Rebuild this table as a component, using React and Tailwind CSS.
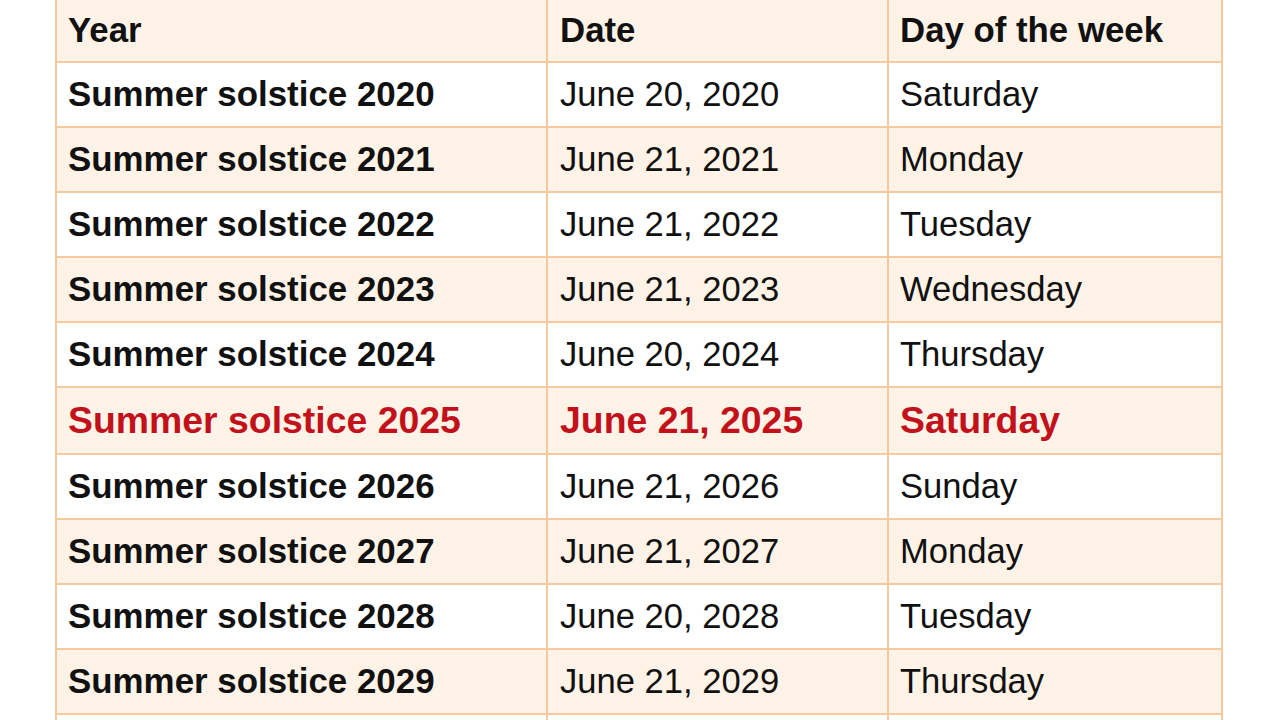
const rows = [
  { year: "Summer solstice 2020", date: "June 20, 2020", day: "Saturday" },
  { year: "Summer solstice 2021", date: "June 21, 2021", day: "Monday" },
  { year: "Summer solstice 2022", date: "June 21, 2022", day: "Tuesday" },
  { year: "Summer solstice 2023", date: "June 21, 2023", day: "Wednesday" },
  { year: "Summer solstice 2024", date: "June 20, 2024", day: "Thursday" },
  { year: "Summer solstice 2025", date: "June 21, 2025", day: "Saturday", hot: true },
  { year: "Summer solstice 2026", date: "June 21, 2026", day: "Sunday" },
  { year: "Summer solstice 2027", date: "June 21, 2027", day: "Monday" },
  { year: "Summer solstice 2028", date: "June 20, 2028", day: "Tuesday" },
  { year: "Summer solstice 2029", date: "June 21, 2029", day: "Thursday" },
];

export default function App() {
  return (
    <div
      className="h-[720px] w-[1279px] overflow-hidden bg-white text-[#111]"
      style={{ fontFamily: '"Liberation Sans", Arial, sans-serif' }}
    >
      <div className="ml-[55px] w-[1168px] border-x-2 border-[#f6c99e]">
        <div className="grid h-[63px] grid-cols-[491px_341px_332px] items-center border-b-2 border-[#f6c99e] bg-[#fef3e6] text-[34.8px] font-bold">
          <div className="flex h-full items-center border-r-2 border-[#f6c99e] pl-[11px]">Year</div>
          <div className="flex h-full items-center border-r-2 border-[#f6c99e] pl-[12px]">Date</div>
          <div className="flex h-full items-center pl-[11px]">Day of the week</div>
        </div>
        {rows.map((r, i) => (
          <div
            key={r.year}
            className={`grid grid-cols-[491px_341px_332px] border-b-2 border-[#f6c99e] ${
              r.hot ? "h-[67px] text-[37.4px] font-bold text-[#c3111c]" : "h-[65px] text-[34.6px]"
            } ${i % 2 === 1 ? "bg-[#fef3e6]" : "bg-white"}`}
          >
            <div
              className={`flex h-full items-center border-r-2 border-[#f6c99e] pl-[11px] font-bold ${
                r.hot ? "" : "text-[34.9px]"
              }`}
            >
              {r.year}
            </div>
            <div className="flex h-full items-center border-r-2 border-[#f6c99e] pl-[12px]">
              {r.date}
            </div>
            <div className="flex h-full items-center pl-[11px]">{r.day}</div>
          </div>
        ))}
        <div className="grid h-[20px] grid-cols-[491px_341px_332px] bg-white">
          <div className="border-r-2 border-[#f6c99e]" />
          <div className="border-r-2 border-[#f6c99e]" />
          <div />
        </div>
      </div>
    </div>
  );
}
